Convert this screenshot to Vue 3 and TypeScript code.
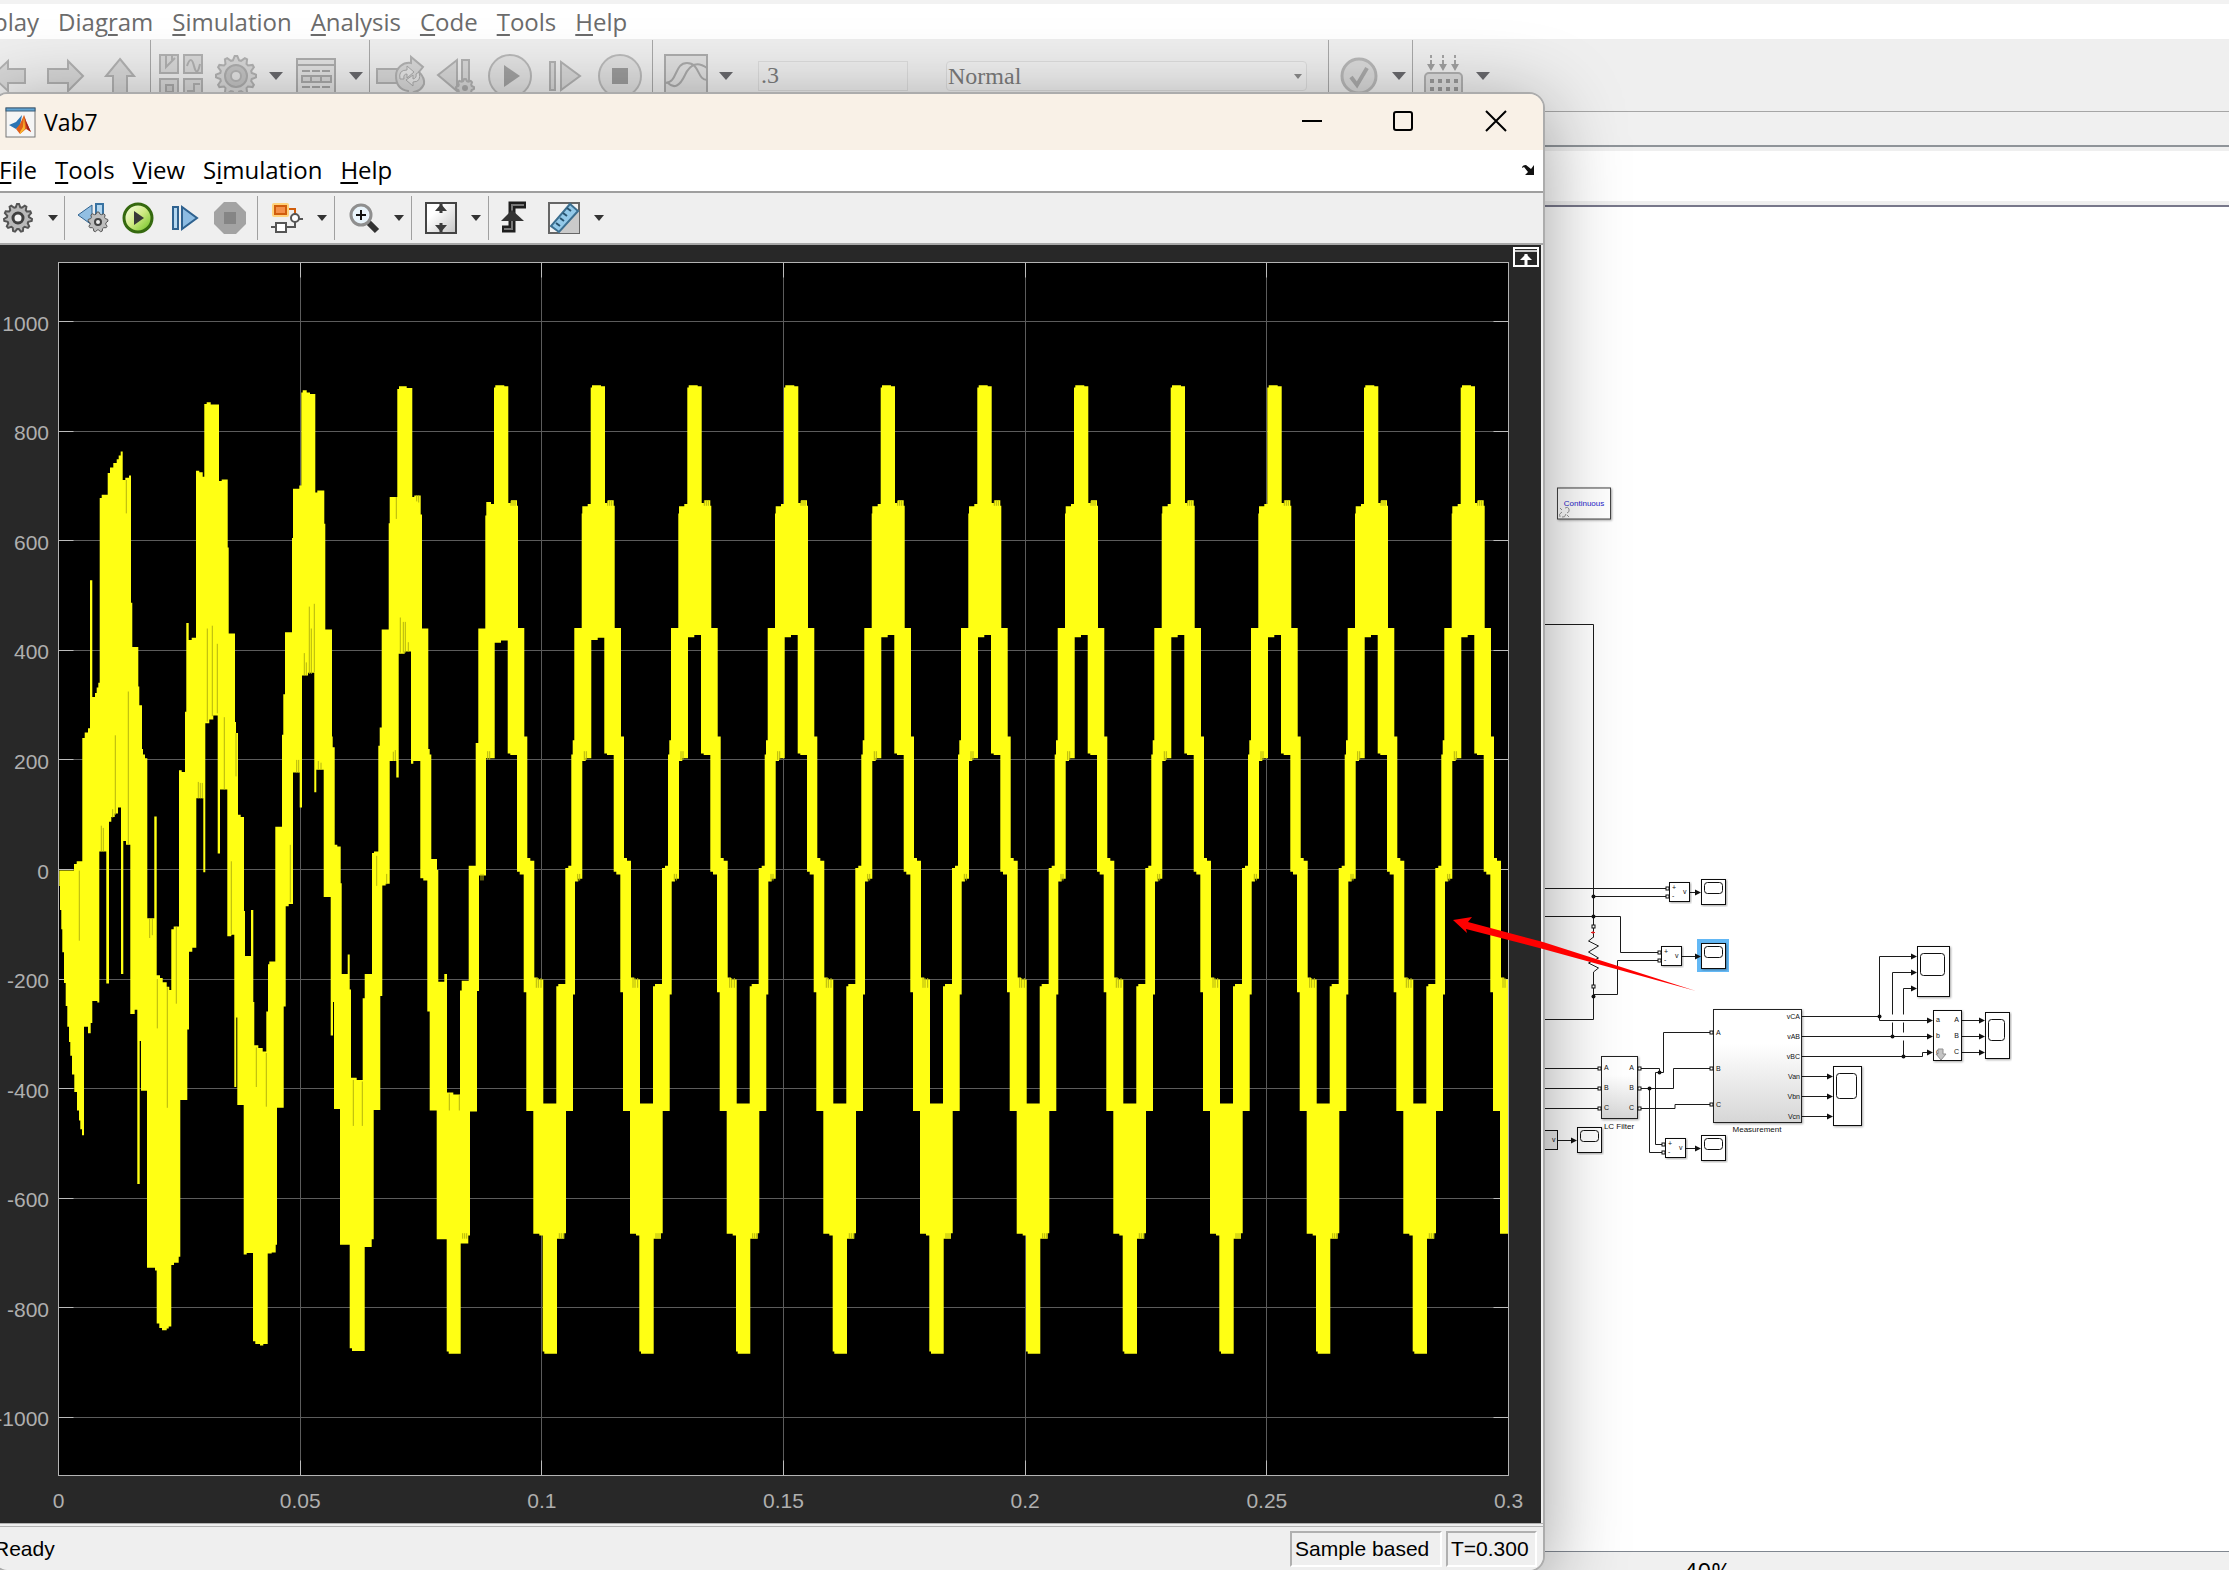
<script setup lang="ts">
type Step = [number, number]

interface Tool { name: string; label: string }

/* ---------- menus ---------- */
const modelMenu: [string, string, string][] = [
  ['play', '', ''], ['Diag', 'r', 'am'], ['', 'S', 'imulation'], ['', 'A', 'nalysis'],
  ['', 'C', 'ode'], ['', 'T', 'ools'], ['', 'H', 'elp'],
]
const scopeMenu: [string, string, string][] = [
  ['', 'F', 'ile'], ['', 'T', 'ools'], ['', 'V', 'iew'], ['S', 'i', 'mulation'], ['', 'H', 'elp'],
]

/* ---------- icons, each on a 44 or 32 unit box ---------- */
function gear(cx: number, cy: number, r: number, teeth: number, depth: number): string {
  const pts: string[] = []
  const n = teeth * 4
  for (let i = 0; i < n; i++) {
    const a = ((i - 0.5) / n) * Math.PI * 2
    const q = i % 4 < 2 ? r : r - depth
    pts.push(`${(cx + q * Math.sin(a)).toFixed(1)},${(cy - q * Math.cos(a)).toFixed(1)}`)
  }
  return pts.join(' ')
}

const soft = 'fill="#d8d8d8" stroke="#b2b2b2" stroke-width="2"'
const modelIcons: Record<string, string> = {
  back: `<path d="M4 22 20 7v8h17v14H20v8z" ${soft}/>`,
  forward: `<path d="M40 22 25 7v8H5v14h20v8z" ${soft}/>`,
  up: `<path d="M22 5 36 22h-7v18H15V22H8z" ${soft}/>`,
  library: `<g ${soft}><path d="M1 1h18v18H1zM25 1h18v18H25zM1 25h18v18H1zM25 25h18v18H25z"/></g><path d="M7 1v12l9-9M13 1v5M28 12q4-12 7 0t6-2M28 37h7v-7h6" fill="none" stroke="#b0b0b0" stroke-width="2"/><rect x="7" y="31" width="7" height="7" fill="#ccc" stroke="#aaa" stroke-width="2"/>`,
  gear: `<polygon points="${gear(22, 22, 20, 12, 4)}" ${soft}/><circle cx="22" cy="22" r="11" fill="#c4c4c4" stroke="#aeaeae" stroke-width="2"/><circle cx="22" cy="22" r="5" fill="#e4e4e4" stroke="#b4b4b4" stroke-width="2"/>`,
  list: `<rect x="3" y="5" width="38" height="38" fill="#e2e2e2" stroke="#adadad" stroke-width="2"/><path d="M3 11h38" stroke="#adadad" stroke-width="2"/><path d="M8 17h8m2 0h8m2 0h8M8 33h8m2 0h8m2 0h8" stroke="#a4a4a4" stroke-width="2"/><path d="M8 22h29v6H8zM17 22v6M27 22v6" fill="#d8d8d8" stroke="#a9a9a9" stroke-width="2"/>`,
  update: `<path d="M-1 15h20v14H-1z" ${soft}/><path d="M18 22A13 13 0 0 1 33 9V3l12 10-4 5q6 6 5 12-3 7-10 8l-6 4v-5q-12-2-12-15z" ${soft}/><path d="M22 25q-2-9 7-9v-4l7 6-7 6v-4q-4 0-3 5zM41 18q3 10-6 10v4l-7-6 7-5v4q4-1 3-5z" fill="#e6e6e6" stroke="#aaa" stroke-width="1"/>`,
  stepBack: `<path d="M5 21 24 6v31z" ${soft}/><path d="M29 6h7v24h-7z" ${soft}/><polygon points="${gear(32, 34, 9, 8, 2)}" ${soft}/><circle cx="32" cy="34" r="3" fill="#aaa"/>`,
  play: `<circle cx="22" cy="22" r="21" fill="#e2e2e2" stroke="#b8b8b8" stroke-width="2"/><path d="M16 11v22l16-11z" fill="#a2a2a2"/>`,
  stepForward: `<path d="M7 8h5v28H7z" ${soft}/><path d="M18 8v28l19-14z" ${soft}/>`,
  stop: `<circle cx="22" cy="22" r="21" fill="#e0e0e0" stroke="#bababa" stroke-width="2"/><rect x="14" y="14" width="16" height="16" fill="#9c9c9c"/>`,
  signal: `<path d="M1 1h42v42H1z" fill="#e0e0e0" stroke="#adadad" stroke-width="2"/><path d="M1 29C14 29 10 9 23 9s10 17 20 17M4 29q9 9 17-8T43 14" fill="none" stroke="#aaa" stroke-width="2"/>`,
  check: `<circle cx="22" cy="22" r="17" fill="#dadada" stroke="#b8b8b8" stroke-width="3"/><path d="m14 23 6 8 10-17" fill="none" stroke="#ababab" stroke-width="4"/>`,
  build: `<path d="M10 1v3m0 2v7m12-12v3m0 2v7M34 1v3m0 2v7" stroke="#a4a4a4" stroke-width="2"/><path d="M6 10h8l-4 7zM18 10h8l-4 7zM30 10h8l-4 7z" fill="#a0a0a0"/><rect x="4" y="19" width="37" height="30" rx="4" fill="#ddd" stroke="#b0b0b0" stroke-width="2"/><path d="M9 27h28M9 35h28" stroke="#999" stroke-width="4" stroke-dasharray="4"/>`,
}

const scopeIcons: Record<string, string> = {
  settings: `<polygon points="${gear(16, 16, 14, 11, 3)}" fill="#b9b9b9" stroke="#555" stroke-width="2"/><circle cx="16" cy="16" r="5" fill="#f4f4f4" stroke="#3f3f3f" stroke-width="3"/>`,
  stepBack: `<path d="M1 13 15 3v20z" fill="#92bfe2" stroke="#2f628f"/><path d="M19 2h7v14h-7z" fill="#b4d7f0" stroke="#3973a2" stroke-width="2"/><polygon points="${gear(21, 20, 10, 9, 2)}" fill="#bdbdbd" stroke="#555"/><circle cx="21" cy="20" r="3" fill="#eee" stroke="#444" stroke-width="2"/>`,
  play: `<defs><linearGradient id="playGreen" x1="0" y1="0" x2="1" y2="1"><stop offset="0" stop-color="#fbfff0"/><stop offset=".5" stop-color="#cfea83"/><stop offset="1" stop-color="#63bd17"/></linearGradient></defs><circle cx="15" cy="16" r="14" fill="url(#playGreen)" stroke="#35690f" stroke-width="3"/><path d="M11 9v14l10-7z" fill="#383838"/>`,
  stepForward: `<path d="M4 5h5v22H4z" fill="#b4d7f0" stroke="#2f628f" stroke-width="2"/><path d="M13 5v22l15-11z" fill="#8dbce2" stroke="#2f628f" stroke-width="2"/>`,
  stop: `<path d="M9 0h12l10 10v12L21 32H9L-1 22V10z" fill="#a3a3a3"/><rect x="9" y="10" width="12" height="12" fill="#858585"/>`,
  blocks: `<rect x="1" y="1" width="17" height="14" rx="2" fill="#ffd27a"/><path d="M4 4h11v8H4z" fill="#f4904a" stroke="#d05d0c" stroke-width="2"/><path d="M18 7h6v5" fill="none" stroke="#d05d0c" stroke-width="2"/><path d="M0 25h5m10 0h9v-5M28 17h4" fill="none" stroke="#555" stroke-width="2"/><path d="M5 21h10v9H5z" fill="#fff" stroke="#555" stroke-width="2"/><circle cx="24" cy="16" r="4" fill="#fff" stroke="#555" stroke-width="2"/>`,
  zoom: `<path d="m20 20 9 9" stroke="#333" stroke-width="6"/><circle cx="13" cy="13" r="10" fill="#e9f4fb" stroke="#8f8f8f" stroke-width="3"/><path d="M8 13h10M13 8v10" stroke="#111" stroke-width="2"/>`,
  fit: `<defs><linearGradient id="fitGrey" x1="0" y1="0" x2="1" y2="1"><stop offset=".3" stop-color="#fff"/><stop offset="1" stop-color="#c4c4c4"/></linearGradient></defs><path d="M1 1h30v30H1z" fill="url(#fitGrey)" stroke="#444" stroke-width="2"/><path d="M16 2v9M16 21v9" stroke="#3b3b3b" stroke-width="3"/><path d="m10 9 6-7 6 7zM10 23l6 7 6-7z" fill="#3b3b3b"/>`,
  trigger: `<path d="M0 27h10V3h14" fill="none" stroke="#1e1e1e" stroke-width="7"/><path d="M2 27h8V3h12" fill="none" stroke="#777" stroke-width="2"/><path d="M-1 19 10 8l12 11z" fill="#333"/>`,
  ruler: `<path d="M1 1h30v30H1z" fill="#f3f3f3" stroke="#666" stroke-width="2"/><path d="M31 8v23H10z" fill="#cacaca"/><path d="M22 2 30 9 11 30 3 24z" fill="#93c9e9" stroke="#3c6f90" stroke-width="2"/><path d="m19 6 4 3m-8 2 4 3m-7 2 4 3m-8 2 4 3" stroke="#28536f" stroke-width="2"/>`,
}

const modelGroups: Tool[][] = [
  [{ name: 'back', label: 'Back' }, { name: 'forward', label: 'Forward' }, { name: 'up', label: 'Up to parent' }],
  [{ name: 'library', label: 'Library browser' }, { name: 'gear', label: 'Configuration' }, { name: '', label: 'More configuration' }, { name: 'list', label: 'Model explorer' }, { name: '', label: 'More explorer' }],
  [{ name: 'update', label: 'Update diagram' }, { name: 'stepBack', label: 'Step back' }, { name: 'play', label: 'Run' }, { name: 'stepForward', label: 'Step forward' }, { name: 'stop', label: 'Stop' }],
]
const scopeGroups: Tool[][] = [
  [{ name: 'settings', label: 'Settings' }, { name: '', label: 'More settings' }],
  [{ name: 'stepBack', label: 'Step back' }, { name: 'play', label: 'Run' }, { name: 'stepForward', label: 'Step forward' }, { name: 'stop', label: 'Stop' }],
  [{ name: 'blocks', label: 'Highlight block' }, { name: '', label: 'More highlight' }],
  [{ name: 'zoom', label: 'Zoom' }, { name: '', label: 'More zoom' }],
  [{ name: 'fit', label: 'Scale axes' }, { name: '', label: 'More scaling' }],
  [{ name: 'trigger', label: 'Triggers' }, { name: 'ruler', label: 'Measurements' }, { name: '', label: 'More measurements' }],
]

/* ---------- plot ---------- */
const left = 58.5, right = 1508.5, top = 262.5, bottom = 1475.5
const yOf = (v: number): number => 869.5 - v * 0.5478
const yTicks = [1000, 800, 600, 400, 200, 0, -200, -400, -600, -800, -1000]
const xTicks = ['0', '0.05', '0.1', '0.15', '0.2', '0.25', '0.3']
const xOf = (i: number): number => left + ((right - left) / 6) * i

/* Start-up transient: [third of a pixel, volts] where each level begins. */
const startUpper: Step[] = [
  [178, -2], [222, 10], [230, 15], [247, 240], [254, 250], [264, 258], [270, 528], [277, 315], [285, 322], [290, 332], [295, 341],
  [299, 678], [305, 684], [323, 724], [330, 734], [340, 742], [350, 749], [356, 756], [362, 763], [368, 711], [376, 715], [387, 719],
  [393, 487], [397, 406], [415, 334], [418, 300], [426, 220], [429, 210], [435, 203], [442, -89], [463, 97], [470, -193], [480, -198],
  [488, -206], [500, -214], [508, -220], [514, -109], [521, -104], [537, 181], [545, 178], [555, 288], [559, 450], [566, 419], [575, 423],
  [588, 728], [598, 725], [608, 717], [613, 850], [620, 853], [632, 849], [657, 709], [665, 712], [683, 588], [686, 431], [705, 269],
  [708, 249], [714, 100], [722, 96], [732, -76], [735, -158], [753, -74], [760, -242], [763, -321], [775, -326], [788, -332], [799, -259],
  [804, -173], [808, -168], [826, 78], [846, 246], [850, 320], [855, 433], [876, 605], [879, 695], [898, 701], [904, 871], [908, 875],
  [920, 871], [930, 868], [946, 688], [952, 692], [973, 631], [976, 438], [996, 243], [998, 223], [1004, 45], [1012, 42], [1022, -25],
  [1025, -191], [1043, -155], [1049, -219], [1053, -380], [1070, -384], [1088, -235], [1094, -191], [1116, 30], [1122, 33], [1135, 226],
  [1139, 259], [1145, 438], [1166, 632], [1169, 680], [1192, 877], [1197, 882], [1220, 879], [1237, 680], [1243, 683], [1262, 648],
  [1266, 440], [1285, 220], [1289, 210], [1294, 19], [1311, -1], [1315, -205], [1333, -191], [1341, -407], [1360, -411], [1380, -221],
  [1385, -203], [1406, 7], [1427, 231], [1435, 440], [1456, 646], [1459, 671],
]
const startLower: Step[] = [
  [178, -30], [180, -74], [184, -109], [187, -151], [192, -207], [197, -249], [202, -287], [207, -315], [211, -340], [216, -374],
  [223, -406], [231, -440], [237, -458], [241, -474], [246, -485], [252, -287], [264, -299], [272, -280], [277, -240], [292, -243],
  [298, 33], [319, -208], [327, 87], [334, 96], [344, 102], [354, 113], [363, -191], [370, 52], [378, 45], [391, -264], [404, -256],
  [412, -574], [419, -313], [423, -404], [441, -727], [465, -732], [470, -829], [478, -837], [486, -841], [500, -838], [506, -834], [514, -722],
  [522, -718], [536, -707], [541, -421], [562, -292], [567, -150], [577, -143], [589, 130], [610, -5], [616, 267], [628, 274], [640, 281],
  [653, 29], [660, 146], [682, -122], [694, -119], [703, -397], [709, -270], [712, -430], [731, -703], [740, -700], [759, -861], [766, -866], [780, -869],
  [790, -866], [803, -701], [815, -699], [827, -685], [831, -435], [851, -250], [857, -67], [866, -63], [879, 177], [899, 113], [906, 354], [924, 359],
  [943, 141], [949, 182], [971, -50], [992, -303], [999, -242], [1002, -437], [1020, -685], [1049, -874], [1056, -879], [1094, -689],
  [1115, -675], [1121, -439], [1141, -231], [1147, -29], [1157, -26], [1169, 198], [1189, 168], [1196, 394], [1214, 398], [1233, 193], [1240, 198],
  [1261, -16], [1270, -20], [1282, -259], [1289, -440], [1310, -675], [1340, -880], [1346, -884], [1382, -683], [1405, -668], [1410, -442],
  [1431, -222], [1437, -11], [1458, 203],
]

/* One settled cycle, as offsets from the middle of its crest. */
const cycleUpper: Step[] = [
  [-124, -213], [-118, -209], [-97, 3], [-88, 7], [-79, 210], [-75, 236], [-70, 441], [-48, 650], [-46, 663], [-30, 667], [-21, 880],
  [-17, 884], [10, 882], [22, 669], [30, 674], [48, 664], [51, 441], [70, 243], [79, 21], [88, 16], [100, -197], [110, -201], [127, -427],
]
const cycleLower: Step[] = [
  [-175, -668], [-165, -880], [-160, -884], [-122, -674], [-100, -664], [-95, -441], [-74, -228], [-68, -22], [-58, -17],
  [-46, 198], [-36, 203], [-19, 424], [0, 428], [20, 212], [28, 209], [48, -4], [56, -9], [68, -224], [76, -441], [97, -665],
]

function repeat(cycle: Step[], skip: number): Step[] {
  const out: Step[] = []
  for (let n = 0; n <= 10; n++) {
    for (const [dx, v] of cycle) {
      const x = 1503 + n * 290 + dx
      /* the inner notch is still settling on the first repeats */
      const settle = v > 420 && v < 430 ? Math.max(0, 10 - n * 5) : 0
      if (x >= skip && x < 4524) out.push([x, v - settle])
    }
  }
  return out.sort((a, b) => a[0] - b[0])
}

const upper = [...startUpper, ...repeat(cycleUpper, 1462)]
const lower = [...startLower, ...repeat(cycleLower, 1459)]

function trace(steps: Step[], end: number): string[] {
  const pts: string[] = []
  steps.forEach(([x, v], i) => {
    const next = i + 1 < steps.length ? steps[i + 1][0] : end
    pts.push(`${(x / 3).toFixed(1)} ${yOf(v).toFixed(1)}`, `${(next / 3).toFixed(1)} ${yOf(v).toFixed(1)}`)
  })
  return pts
}
const wave = 'M' + [...trace(upper, 4525), ...trace(lower, 4525).reverse()].join('L') + 'Z'

/* Thin darker gaps between switching pulses: x, from, to. */
const gaps: [number, number, number][] = [
  [238, -130, -2], [346, 100, 245], [385, 45, 325], [379, 650, 711], [472, -290, -200], [502, -435, -215], [529, -245, -105], [622, 270, 440],
  [637, 280, 445], [652, 285, 412], [673, 146, 278], [928, 357, 480], [934, 357, 440], [943, 360, 485], [769, -397, -325], [799, -433, -335],
  [304, 33, 80], [310, 33, 76], [338, 95, 110], [449, -125, -89], [457, -120, -89], [595, 130, 160], [601, 130, 158], [607, 130, 158],
  [694, -118, 15], [708, 170, 249], [871, -60, 45], [913, 355, 395], [919, 355, 378], [1060, -468, -384], [1087, -468, -387], [1130, -30, 25],
  [1201, 396, 460], [1210, 396, 452], [1216, 396, 452], [1225, 398, 415], [1348, -440, -409], [1378, -440, -412], [1189, 640, 680], [1250, 672, 683],
  [1256, 670, 683], [890, 177, 200], [896, 177, 200], [955, 182, 198], [963, 182, 195], [1180, 198, 215], [1186, 198, 218], [1160, -27, -8],
]
for (let n = 0; n <= 10; n++) {
  const c = 1503 + n * 290
  for (const d of [30, 36, 42]) gaps.push([c + d, 664, 673])
  for (const d of [-60, -54]) gaps.push([c + d, -20, -8])
  for (const d of [-40, -34]) gaps.push([c + d, 200, 216])
  for (const d of [106, 112, 120]) gaps.push([c + d, -216, -198])
  for (const d of [-115, -109, -103]) gaps.push([c + d, -674, -664])
}
const gapPath = gaps.filter(g => g[0] < 4520).map(([x, a, b]) => `M${(x / 3).toFixed(1)} ${yOf(a).toFixed(1)}V${yOf(b).toFixed(1)}`).join('')

/* ---------- block diagram ---------- */
const scopes = [
  { x: 1701, y: 879, w: 25, h: 26, sh: 12 }, { x: 1701, y: 943, w: 25, h: 26, sh: 12 },
  { x: 1701, y: 1135, w: 25, h: 26, sh: 12 }, { x: 1577, y: 1127, w: 25, h: 26, sh: 12 },
  { x: 1917, y: 946, w: 33, h: 51, sh: 23 }, { x: 1985, y: 1012, w: 25, h: 47, sh: 22 },
  { x: 1833, y: 1066, w: 29, h: 60, sh: 26 },
]
const meters = [{ x: 1669, y: 882 }, { x: 1661, y: 946 }, { x: 1665, y: 1138 }]
const arrows: [number, number][] = [
  [1701, 892], [1701, 956], [1701, 1148], [1577, 1140], [1917, 956], [1917, 972], [1917, 988],
  [1933, 1020], [1933, 1036], [1933, 1052], [1985, 1020], [1985, 1036], [1985, 1052],
  [1833, 1076], [1833, 1096], [1833, 1116],
]
const nodes: [number, number][] = [[1593, 896], [1593, 916], [1593, 996], [1659, 1072], [1649, 1088], [1879, 1016], [1892, 1036], [1903, 1056]]
const ports: [number, number][] = [
  [1667, 888], [1667, 896], [1659, 952], [1659, 960], [1663, 1144], [1663, 1152], [1593, 926], [1593, 986],
  [1599, 1068], [1599, 1088], [1599, 1108], [1639, 1068], [1639, 1088], [1639, 1108], [1711, 1032], [1711, 1068], [1711, 1104],
]
const outputs = ['vCA', 'vAB', 'vBC', 'Van', 'Vbn', 'Vcn']
</script>

<template>
  <main class="desktop">
    <section class="model">
      <nav class="menu model-menu">
        <button v-for="m in modelMenu" :key="m.join('')" type="button">{{ m[0] }}<u>{{ m[1] }}</u>{{ m[2] }}</button>
      </nav>
      <div class="model-tools">
        <div v-for="(g, gi) in modelGroups" :key="gi" class="group">
          <button v-for="t in g" :key="t.label" type="button" :aria-label="t.label" :class="t.name ? 'tool' : 'caret'">
            <svg v-if="t.name" viewBox="0 0 44 44" v-html="modelIcons[t.name]" />
            <svg v-else viewBox="0 0 14 8"><path d="M0 0h14L7 8z" fill="#6a6a6e" /></svg>
          </button>
        </div>
        <div class="group run">
          <button type="button" class="tool" aria-label="Data inspector"><svg viewBox="0 0 44 44" v-html="modelIcons.signal" /></button>
          <button type="button" class="caret" aria-label="More inspector"><svg viewBox="0 0 14 8"><path d="M0 0h14L7 8z" fill="#6a6a6e" /></svg></button>
          <input class="stop-time" type="text" value=".3" aria-label="Stop time">
          <div class="mode">
            <select aria-label="Simulation mode"><option>Normal</option></select>
            <svg viewBox="0 0 8 5"><path d="M0 0h8L4 5z" fill="#8b8b8b" /></svg>
          </div>
        </div>
        <div v-for="n in ['check', 'build']" :key="n" class="group">
          <button type="button" class="tool" :aria-label="n"><svg viewBox="0 0 44 44" v-html="modelIcons[n]" /></button>
          <button type="button" class="caret" :aria-label="'More ' + n"><svg viewBox="0 0 14 8"><path d="M0 0h14L7 8z" fill="#6a6a6e" /></svg></button>
        </div>
      </div>
      <div class="tabs" />
      <div class="path" />
      <div class="canvas">
        <svg class="diagram" viewBox="0 207 2229 1340" preserveAspectRatio="xMinYMin meet">
          <defs>
            <linearGradient id="block" x1="0" y1="0" x2="0" y2="1"><stop offset=".3" stop-color="#fff" /><stop offset="1" stop-color="#d6d6d6" /></linearGradient>
            <filter id="drop"><feDropShadow dx="1" dy="1" stdDeviation="1" flood-opacity=".35" /></filter>
          </defs>
          <g fill="none" stroke="#1c1c1c">
            <path d="M1530 624.5h63.500v313M1593.500 976v43.500H1530M1530 888.500h137M1593 896.500h74M1530 916.500h90.500v36H1659M1659 960.500h-41.500v34h-24" />
            <path d="M1593.500 937l-5 4 10 5-10 6 10 6-10 5 10 5-5 4v5" />
            <path d="M1530 1068.500h69M1530 1088.500h69M1530 1108.500h69M1639 1068.500h20.500v4h4v-40h48M1659 1072.500h-3.500v72h8M1639 1088.500h34.500v-20h38M1649.500 1088v64.500h14M1639 1108.500h36v-4h36" />
            <path d="M1690 892.500h8M1682 956.500h16M1686 1148.500h12M1557 1140.500h17M1962 1020.500h20M1962 1036.500h20M1962 1052.500h20M1802 1076.500h28M1802 1096.500h28M1802 1116.500h28" />
            <path d="M1892.500 1036v-63.500H1914M1903.500 1056v-67.500H1914" />
            <path d="M1884 1018.500h24M1896 1036.500h14" stroke="#fff" stroke-width="8" />
            <path d="M1802 1016.500h77.500v-60H1914M1879.500 1016v4.500H1930M1802 1036.500h128M1802 1056.500h120.500v-4h8" />
          </g>
          <rect x="1697" y="939" width="32" height="33" fill="#63b8f5" />
          <g v-for="(s, i) in scopes" :key="'s' + i" stroke="#111">
            <rect :x="s.x + 0.5" :y="s.y + 0.5" :width="s.w - 1" :height="s.h - 1" fill="#fff" filter="url(#drop)" />
            <rect :x="s.x + 3.5" :y="s.y + (s.sh > 20 ? 7 : 3) + 0.5" :width="s.w - (s.sh > 20 ? 9 : 7)" :height="s.sh - 1" rx="3" fill="#fff" />
          </g>
          <g v-for="(m, i) in meters" :key="'m' + i" class="tiny">
            <rect :x="m.x + 0.5" :y="m.y + 0.5" width="20" height="19" fill="#fff" stroke="#111" filter="url(#drop)" />
            <text :x="m.x + 3" :y="m.y + 8">+</text><text :x="m.x + 3" :y="m.y + 16">-</text><text :x="m.x + 14" :y="m.y + 12">v</text>
          </g>
          <rect x="1530.5" y="1130.5" width="27" height="19" fill="#eee" stroke="#111" />
          <text class="tiny" x="1552" y="1142">v</text>
          <rect x="1601.5" y="1056.5" width="36" height="62" fill="url(#block)" stroke="#222" filter="url(#drop)" />
          <rect x="1713.5" y="1009.500" width="88" height="113" fill="url(#block)" stroke="#222" filter="url(#drop)" />
          <rect x="1933.5" y="1010.5" width="28" height="50" fill="#fff" stroke="#111" filter="url(#drop)" />
          <g class="tiny">
            <template v-for="(c, i) in ['A', 'B', 'C']" :key="c">
              <text x="1604" :y="1070 + i * 20">{{ c }}</text>
              <text x="1634" :y="1070 + i * 20" text-anchor="end">{{ c }}</text>
              <text x="1716" :y="1035 + i * 36">{{ c }}</text>
              <text x="1959" :y="1022 + i * 16" text-anchor="end">{{ c }}</text>
              <text x="1936" :y="1022 + i * 16">{{ c.toLowerCase() }}</text>
            </template>
            <text v-for="(o, i) in outputs" :key="o" x="1800" :y="1019 + i * 20" text-anchor="end">{{ o }}</text>
          </g>
          <path d="M1938 1049h5v5h3l-5 6-5-6h2z" fill="#c4c4c4" stroke="#909090" />
          <g class="caption">
            <text x="1619" y="1129" text-anchor="middle">LC Filter</text>
            <text x="1757" y="1132" text-anchor="middle">Measurement</text>
          </g>
          <g fill="#111">
            <path v-for="(a, i) in arrows" :key="'a' + i" :d="`M${a[0]} ${a[1] + 0.5}l-6-3v6z`" />
            <circle v-for="(n, i) in nodes" :key="'n' + i" :cx="n[0] + 0.5" :cy="n[1] + 0.5" r="2" />
          </g>
          <rect v-for="(p, i) in ports" :key="'p' + i" :x="p[0] - 1" :y="p[1] - 1" width="3" height="3" fill="#fff" stroke="#111" />
          <path d="M1591 932.500h4M1593 931v3" stroke="#e22" />
          <rect x="1557.500" y="488" width="53" height="31" fill="#fff" stroke="#444" filter="url(#drop)" />
          <text class="caption blue" x="1584" y="506" text-anchor="middle">Continuous</text>
          <path d="M1560 517q-2-3 2-5M1562 517q3 1 4-3M1565 508q3-2 4 1t-2 4M1560 508l2 2M1567 515l2 2" fill="none" stroke="#999" />
        </svg>
      </div>
      <footer class="model-status"><span>40%</span></footer>
    </section>

    <section class="scope">
      <header class="title">
        <svg class="logo" viewBox="0 0 31 31">
          <rect x="1" y="1" width="29" height="29" fill="#f5f5f5" stroke="#777" /><rect x="1" y="1" width="29" height="3" fill="#62a5d3" stroke="#3a5d78" />
          <path d="m4 18 7-3 6-7-2 11-4 3z" fill="#2b74b3" /><path d="m11 22 4-5 4-9 2 6 5 11-5-3-6 5z" fill="#e0601a" /><path d="m15 25 3-5 1-11 1 13-5 5z" fill="#f8b62d" /><path d="m19 8 2 6 5 11-4-3z" fill="#a3211d" />
        </svg>
        <h1>Vab7</h1>
        <button type="button" aria-label="Minimize"><svg viewBox="0 0 22 22"><path d="M1 10h20" /></svg></button>
        <button type="button" aria-label="Maximize"><svg viewBox="0 0 22 22"><rect x="1" y="1" width="18" height="18" rx="2" /></svg></button>
        <button type="button" aria-label="Close"><svg viewBox="0 0 22 22"><path d="m1 0 20 20M21 0 1 20" /></svg></button>
      </header>
      <nav class="menu scope-menu">
        <button v-for="m in scopeMenu" :key="m.join('')" type="button">{{ m[0] }}<u>{{ m[1] }}</u>{{ m[2] }}</button>
        <svg class="dock" viewBox="0 0 16 13"><path d="M1 5q0-3 4-3l5 4 3-4v10H4l3-3-4-5z" fill="#111" /></svg>
      </nav>
      <div class="scope-tools">
        <div v-for="(g, gi) in scopeGroups" :key="gi" class="group">
          <button v-for="t in g" :key="t.label" type="button" :aria-label="t.label" :class="t.name ? 'tool' : 'caret'">
            <svg v-if="t.name" viewBox="0 0 32 32" v-html="scopeIcons[t.name]" />
            <svg v-else viewBox="0 0 10 6"><path d="M0 0h10L5 6z" fill="#333" /></svg>
          </button>
        </div>
      </div>
      <div class="plot">
        <svg viewBox="-6 245 1547 1274" preserveAspectRatio="xMinYMin meet">
          <rect :x="left" :y="top" :width="right - left" :height="bottom - top" fill="#000" />
          <g stroke="#5c5c5c">
            <path v-for="v in yTicks" :key="v" :d="`M${left} ${Math.floor(yOf(v)) + 0.5}H${right}`" />
            <path v-for="i in 5" :key="i" :d="`M${Math.floor(xOf(i)) + 0.5} ${top}V${bottom}`" />
          </g>
          <g stroke="#bcbcbc">
            <path v-for="v in yTicks" :key="v" :d="`M${left} ${Math.floor(yOf(v)) + 0.5}h15M${right} ${Math.floor(yOf(v)) + 0.5}h-15`" />
            <path v-for="i in 5" :key="i" :d="`M${Math.floor(xOf(i)) + 0.5} ${top}v15M${Math.floor(xOf(i)) + 0.5} ${bottom}v-15`" />
          </g>
          <path :d="wave" fill="#ffff14" />
          <path :d="gapPath" stroke="#b4b40e" fill="none" />
          <rect :x="left" :y="top" :width="right - left" :height="bottom - top" fill="none" stroke="#b4b4b4" />
          <g class="axis">
            <text v-for="v in yTicks" :key="v" x="49" :y="Math.round(yOf(v)) + 9" text-anchor="end">{{ v }}</text>
            <text v-for="(t, i) in xTicks" :key="t" :x="xOf(i)" y="1508" text-anchor="middle">{{ t }}</text>
          </g>
          <path d="M1514 248h24v18h-24z" fill="#282828" stroke="#fff" stroke-width="2" /><path d="M1515 251h22" stroke="#ccc" stroke-width="2" />
          <path d="M1526 254v11" stroke="#fff" stroke-width="3" /><path d="m1520 260 6-6 6 6z" fill="#fff" />
        </svg>
      </div>
      <footer class="scope-status"><span>Ready</span><output class="sample">Sample based</output><output class="clock">T=0.300</output></footer>
    </section>

    <svg class="pointer" viewBox="0 0 243 75"><path d="M0 3 19 0l-4 5 75 20 153 49L90 32 13 12l1 4z" fill="#f00" /></svg>
  </main>
</template>

<style>
body { margin: 0; overflow: hidden; }
</style>

<style scoped>
.desktop { position: relative; height: 100vh; min-height: 600px; overflow: hidden; background: #fff; }
button, input, select { font: inherit; color: inherit; background: none; border: 0; margin: 0; padding: 0; }
button { display: block; flex: none; }
svg { display: block; overflow: visible; }

.model { display: flex; flex-direction: column; height: 100%; }
.menu { display: flex; align-items: center; gap: 18px; font: 24px/34px "Open Sans", "Noto Sans", sans-serif; box-sizing: border-box; }
.menu u { text-decoration-thickness: 2px; text-underline-offset: 3px; }
.model-menu { flex: none; gap: 19px; height: 40px; margin-left: -7px; border-top: 4px solid #f2f2f2; border-bottom: 1px solid #eee; color: #6c6c6c; }

.model-tools { display: flex; flex: none; height: 72px; box-sizing: border-box; padding-left: 4px; background: #efefef; border-bottom: 1px solid #a6a6a6; }
.group { display: flex; align-items: center; }
.model-tools .group { gap: 11px; padding: 0 6px 0 8px; border-right: 1px solid #a8a8a8; }
.model-tools .group:first-child { margin-left: -24px; padding-right: 8px; }
.model-tools .group:nth-child(3) { padding-right: 10px; }
.model-tools .group:last-child { border: 0; }
.model-tools .run { padding: 0 21px 0 11px; }
.model-tools .tool { width: 44px; height: 44px; }
.model-tools .caret { width: 14px; height: 8px; }
.stop-time, .mode select { box-sizing: border-box; height: 30px; border: 1px solid #ddd; font: 24px/28px "Liberation Serif", serif; color: #7c7c7c; }
.stop-time { width: 150px; margin-left: 14px; padding-left: 2px; }
.mode { position: relative; margin-left: 27px; }
.mode select { display: block; width: 361px; padding-left: 1px; border-radius: 4px; background: #f1f1f1; appearance: none; }
.mode svg { position: absolute; right: 5px; top: 13px; width: 8px; height: 5px; }

.tabs { flex: none; height: 33px; background: #f0f0f0; border-bottom: 2px solid #8f9499; }
.path { flex: none; height: 50px; border-top: 4px solid #efefef; border-bottom: 4px solid #efefef; background: #fff; }
.canvas { flex: 1; min-height: 0; overflow: hidden; border-top: 2px solid #77778a; background: #fff; }
.diagram { width: 100%; height: 100%; }
.tiny { font: 7px "Liberation Sans", sans-serif; fill: #111; }
.caption { font: 8px "Liberation Sans", sans-serif; fill: #111; }
.blue { fill: #1d1dcc; }
.model-status { flex: none; height: 18px; overflow: hidden; border-top: 1px solid #808790; background: #f0f0f0; font: 24px/38px "Open Sans", sans-serif; display: flex; justify-content: flex-end; }
.model-status span { margin-right: 498px; }

.scope { position: absolute; left: -8px; right: 684px; top: 92px; bottom: -2px; display: flex; flex-direction: column; border: 2px solid #acacac; border-radius: 16px; overflow: hidden; background: #efefef; box-shadow: 0 14px 80px rgba(0, 0, 0, .38); }
.title { display: flex; align-items: center; flex: none; height: 56px; padding: 0 1px 0 11px; background: #f9f1e7; }
.logo { width: 31px; height: 31px; }
.title h1 { flex: 1; margin: 0 0 0 8px; font: 23px/32px "Open Sans", sans-serif; }
.title button { display: flex; align-items: center; justify-content: center; width: 92px; height: 56px; }
.title button svg { width: 22px; height: 22px; fill: none; stroke: #000; stroke-width: 2; }
.scope-menu { flex: none; height: 43px; padding: 0 6px 2px 5px; border-bottom: 2px solid #9f9f9f; background: #fff; color: #000; }
.dock { width: 16px; height: 13px; margin-left: auto; }
.scope-tools { display: flex; flex: none; height: 50px; padding: 0; border-bottom: 2px solid #a8a8a8; }
.scope-tools .group { gap: 14px; margin: 3px 0; padding: 0 7px 0 13px; border-right: 1px solid #a0a0a0; }
.scope-tools .group:first-child { padding: 0 6px 0 8px; }
.scope-tools .group:nth-child(2) { padding: 0 10px 0 12px; }
.scope-tools .group:last-child { border: 0; }
.scope-tools .tool { width: 32px; height: 32px; }
.scope-tools .caret { width: 10px; height: 6px; }
.plot { flex: 1; min-height: 0; margin-right: 2px; background: #282828; }
.plot svg { width: 100%; height: 100%; }
.axis { font: 21px "Liberation Sans", sans-serif; fill: #afafaf; }
.scope-status { display: flex; align-items: center; flex: none; gap: 4px; height: 43px; padding-right: 6px; border-top: 4px double #b2b2b2; background: #efefef; font: 21px/32px "Liberation Sans", sans-serif; }
.scope-status span { flex: 1; }
.scope-status output { box-sizing: border-box; height: 36px; padding-left: 3px; border: 2px solid #b0b0b0; border-right-color: #fff; border-bottom-color: #fff; }
.sample { width: 152px; }
.clock { width: 91px; }
.pointer { position: absolute; left: 1453px; top: 917px; width: 243px; height: 75px; }
</style>
